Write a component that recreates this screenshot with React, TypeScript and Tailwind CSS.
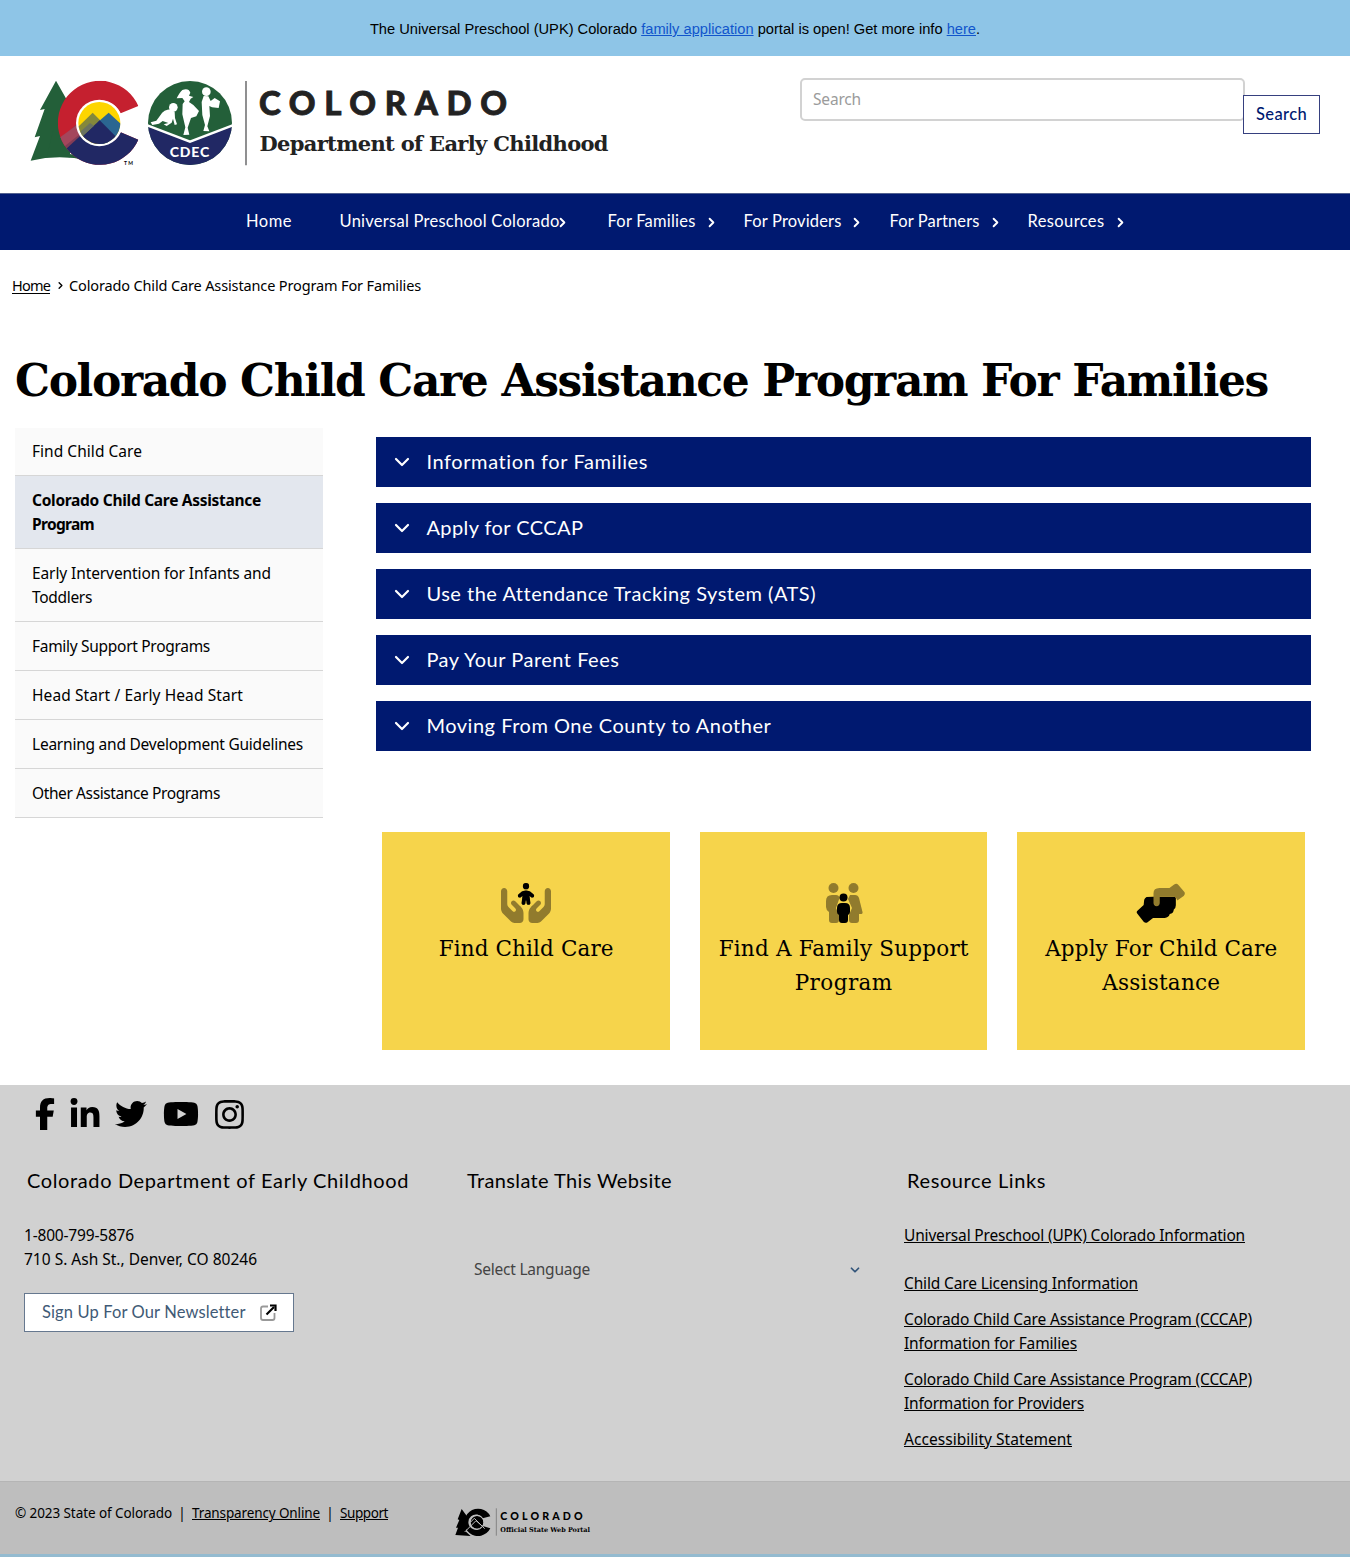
import { useLayoutEffect, useRef, useState } from "react";
import { ChevronDown, ChevronRight } from "lucide-react";
import { FaFacebookF, FaLinkedinIn, FaTwitter, FaYoutube, FaInstagram, FaHandsHoldingChild } from "react-icons/fa6";

/* A single line of text tracked so that it spans the given width. */
function Line({ w, children, className = "" }: { w: number; children: string; className?: string }) {
  const ref = useRef<HTMLSpanElement>(null);
  const [spacing, setSpacing] = useState(0);
  useLayoutEffect(() => {
    if (!ref.current) return;
    const natural = ref.current.getBoundingClientRect().width - spacing * children.length;
    setSpacing((w - natural) / children.length);
  }, [w, children]);
  return (
    <span ref={ref} className={"inline-block whitespace-nowrap " + className} style={{ letterSpacing: spacing + "px" }}>
      {children}
    </span>
  );
}

function Logo() {
  return (
    <svg viewBox="0 0 690 315" className="h-[105px] w-[230px] shrink-0">
      <defs>
        <clipPath id="cShape">
          <path d="M355 108A126 126 0 1 0 355 209L302 187A67 67 0 1 1 302 130Z" />
        </clipPath>
        <clipPath id="inner"><circle cx="238" cy="159" r="63" /></clipPath>
        <clipPath id="badge"><circle cx="510" cy="159" r="126" /></clipPath>
      </defs>
      <path d="M108 32L142 92L132 250Q180 255 205 272Q120 252 32 272L60 198L44 202L74 117L60 120Z" fill="#235f39" />
      <path d="M100 180H150V262Q110 256 80 262Z" fill="#235f39" />
      <g clipPath="url(#cShape)">
        <rect x="110" y="30" width="250" height="260" fill="#c5202f" />
        <path d="M110 217L190 145L240 175L143 245L120 240Z" fill="#823c56" />
        <path d="M139 236L200 180H360V290H180Z" fill="#212864" />
        <path d="M113 207L180 158L190 184L134 229Z" fill="#a4465c" />
      </g>
      <circle cx="238" cy="159" r="70" fill="#fff" />
      <g clipPath="url(#inner)">
        <rect x="170" y="90" width="140" height="140" fill="#fdd500" />
        <path d="M165 180L218 128L245 155L200 210Z" fill="#84883b" />
        <path d="M234 156L266 128L310 168V225H240Z" fill="#2b6691" />
        <path d="M170 215L239 151L310 222V240H170Z" fill="#212864" />
        <path d="M170 195L210 159L222 167L170 214Z" fill="#69715f" />
      </g>
      <circle cx="510" cy="159" r="126" fill="#235f39" />
      <path clipPath="url(#badge)" d="M380 169L510 217L640 169V290H380Z" fill="#212864" />
      <path d="M382 166L510 215L638 166" fill="none" stroke="#fff" strokeWidth="7" />
      <g fill="#fff">
        <circle cx="460" cy="112" r="13" />
        <path d="M452 118Q432 118 420 137L409 152L392 157L397 165L417 161L428 153L445 159L431 163L440 168L455 158L459 146L464 165L471 163L465 144L464 126Z" />
        <path d="M470 85Q480 65 487 60Q506 53 511 68L507 77L520 81L512 86L507 96L520 105L537 123L529 139L513 144L503 173L508 194L490 195L496 172L487 133L488 102L494 94L487 84Z" />
        <circle cx="559" cy="65" r="13" />
        <path d="M551 78L565 79L572 93L584 84L600 94L596 114L576 112L568 108L570 138L562 169L568 184L550 183L555 165L547 135L545 96Z" />
      </g>
      <text x="449" y="260" textLength="119" className="fill-white font-[Lato] text-[42px] font-black">CDEC</text>
      <text x="312" y="284" textLength="27" className="fill-black font-[Lato] text-[15px] font-bold">TM</text>
      <path d="M678 33V286" stroke="#58585a" strokeWidth="4" />
    </svg>
  );
}

function FamilyIcon() {
  return (
    <svg viewBox="0 0 38 40" className="h-10 w-[38px]">
      <g fill="#917b2d">
        <circle cx="8.500" cy="5" r="5" />
        <circle cx="28.500" cy="5" r="5" />
        <path d="M7 12H11Q14 12 14.500 15L11 25L14 32V37Q14 40 11 40H7Q4 40 4 37V29Q1 27 1 24V18Q1 12 7 12Z" />
        <path d="M25 12H30Q33 12 34 15L37.500 29Q38 31 35.500 31H34V37Q34 40 31 40H27Q24 40 24 37V32L27 25L23 16Z" />
      </g>
      <g fill="#000">
        <circle cx="18.500" cy="14.500" r="4" />
        <path d="M17 20H20Q25 20 25 25V29Q25 31 23 32V37Q23 40 20 40H17Q14 40 14 37V32Q12 31 12 29V25Q12 20 17 20Z" />
      </g>
    </svg>
  );
}

function HelpingIcon() {
  return (
    <svg viewBox="0 0 640 512" className="h-10 w-[50px]">
      <path d="M496 176H224L135 178Q112 192 105 214L98 280L22 352Q-2 372 18 395L98 496Q122 520 148 502L218 448H368Q418 446 432 398Q480 392 484 340Q510 320 510 285V190Z" />
      <path fill="#917b2d" d="M622 118L540 22Q518 -4 484 22L428 64H300Q224 66 224 130V256Q226 296 264 296T304 256V176H480Q516 178 528 224L610 166Q632 144 622 118Z" />
    </svg>
  );
}

function ChildIcon() {
  return (
    <span className="grid h-10 w-[50px] [&>*]:col-start-1 [&>*]:row-start-1">
      <FaHandsHoldingChild className="h-10 w-[50px] text-[#917b2d]" />
      <FaHandsHoldingChild className="h-10 w-[50px] text-black [clip-path:polygon(20%_0,80%_0,80%_37%,62%_43%,62%_58%,38%_58%,38%_43%,20%_37%)]" />
    </span>
  );
}

function SmallLogo() {
  return (
    <svg viewBox="0 0 510 246" className="h-[82px] w-[170px]">
      <path d="M65 102L82 125L78 170L92 183L46 180L54 158L48 158L58 135L53 133Z" />
      <path d="M151 124A41 41 0 1 0 151 160L128 153A23 23 0 1 1 128 130Z" />
      <circle cx="111" cy="142" r="19" />
      <path d="M74 171L108 137L132 158M91 142L103 130L134 161" fill="none" stroke="#bebebe" strokeWidth="3" />
      <circle cx="111" cy="142" r="21" fill="none" stroke="#bebebe" strokeWidth="3" />
      <path d="M169 100V182" stroke="#666" strokeWidth="2" />
      <text x="181" y="135" textLength="247" className="font-[Lato] text-[32px] font-black">COLORADO</text>
      <text x="181" y="171" textLength="269" lengthAdjust="spacingAndGlyphs" className="font-['DejaVu_Serif'] text-[20px] font-bold">Official State Web Portal</text>
    </svg>
  );
}

const navItems = [
  { t: "Home", w: 46, cls: "w-[93.500px]" },
  { t: "Universal Preschool Colorado", w: 220, cls: "w-[268px]", chev: "-ml-[5px]" },
  { t: "For Families", w: 88, cls: "w-[136px]", chev: "ml-[8px]" },
  { t: "For Providers", w: 98, cls: "w-[146px]", chev: "ml-[7px]" },
  { t: "For Partners", w: 90, cls: "w-[138px]", chev: "ml-[8px]" },
  { t: "Resources", w: 77, cls: "w-[110px]", chev: "ml-[8px]" },
];

const sideItems: { lines: [string, number][]; active?: boolean }[] = [
  { lines: [["Find Child Care", 110]] },
  { lines: [["Colorado Child Care Assistance", 229], ["Program", 62]], active: true },
  { lines: [["Early Intervention for Infants and", 239], ["Toddlers", 60]] },
  { lines: [["Family Support Programs", 178]] },
  { lines: [["Head Start / Early Head Start", 211]] },
  { lines: [["Learning and Development Guidelines", 271]] },
  { lines: [["Other Assistance Programs", 188]] },
];

const accordions: [string, number][] = [
  ["Information for Families", 222],
  ["Apply for CCCAP", 157],
  ["Use the Attendance Tracking System (ATS)", 389],
  ["Pay Your Parent Fees", 193],
  ["Moving From One County to Another", 345],
];

const cards: { icon: () => React.ReactNode; lines: [string, number][] }[] = [
  { icon: ChildIcon, lines: [["Find Child Care", 175]] },
  { icon: FamilyIcon, lines: [["Find A Family Support", 250], ["Program", 98]] },
  { icon: HelpingIcon, lines: [["Apply For Child Care", 232], ["Assistance", 118]] },
];

const resourceLinks: { lines: [string, number][]; cls: string }[] = [
  { lines: [["Universal Preschool (UPK) Colorado Information", 341]], cls: "mb-6" },
  { lines: [["Child Care Licensing Information", 234]], cls: "mb-3" },
  { lines: [["Colorado Child Care Assistance Program (CCCAP)", 348], ["Information for Families", 173]], cls: "mb-3" },
  { lines: [["Colorado Child Care Assistance Program (CCCAP)", 348], ["Information for Providers", 180]], cls: "mb-3" },
  { lines: [["Accessibility Statement", 168]], cls: "" },
];

export default function App() {
  return (
    <div className="flex h-[1557px] w-[1350px] flex-col overflow-hidden bg-white font-['Noto_Sans',sans-serif] text-[15.500px] text-black">
      <div className="flex h-14 shrink-0 items-center justify-center bg-[#8ec5e7] pt-[2px] font-['Liberation_Sans',sans-serif] text-[14.67px]">
        <p className="whitespace-nowrap">
          The Universal Preschool (UPK) Colorado <a className="text-[#1155cc] underline">family application</a> portal is open! Get more info{" "}
          <a className="text-[#1155cc] underline">here</a>.
        </p>
      </div>

      <header className="flex h-[137px] shrink-0 items-start pl-5">
        <div className="mt-[14px] flex">
          <Logo />
          <svg viewBox="0 0 370 105" className="h-[105px] w-[370px] overflow-visible">
            <text x="9" y="45" textLength="248" className="fill-[#222] stroke-[#222] stroke-[0.8] font-[Lato] text-[33px] font-black">COLORADO</text>
            <text x="9.500" y="81" textLength="349" className="fill-[#222] font-['DejaVu_Serif'] text-[21px] font-bold">Department of Early Childhood</text>
          </svg>
        </div>
        <div className="ml-[180px] mt-[22px] flex items-start">
          <div className="flex h-[43px] w-[445px] items-center rounded-[5px] border-2 border-[#d2d2d2] pl-[11px] text-[#9b9b9b]">
            <Line w={48}>Search</Line>
          </div>
          <div className="-ml-[2px] mt-[17px] flex h-[39px] w-[77px] items-center justify-center border border-[#36407f] bg-white font-[Lato] text-[16.500px] font-medium text-[#001970]">
            <Line w={51}>Search</Line>
          </div>
        </div>
      </header>

      <nav className="flex h-[57px] shrink-0 border-t border-[#52618f] bg-[#001970] pl-[246px] font-[Lato] text-[16.500px] text-white">
        {navItems.map((n) => (
          <div key={n.t} className={"flex h-[55px] shrink-0 items-center " + n.cls}>
            <Line w={n.w}>{n.t}</Line>
            {n.chev && <ChevronRight size={15} strokeWidth={3} className={"mt-px shrink-0 " + n.chev} />}
          </div>
        ))}
      </nav>

      <div className="flex h-[71px] shrink-0 items-center pl-3 text-[14.500px]">
        <Line w={38} className="underline underline-offset-2">Home</Line>
        <ChevronRight size={11} strokeWidth={3} className="ml-[4.500px] mr-[3.500px]" />
        <Line w={352}>Colorado Child Care Assistance Program For Families</Line>
      </div>

      <h1 className="h-[107px] shrink-0 pl-[15px] pt-[30px] font-['DejaVu_Serif',serif] text-[44px] font-bold leading-[60px]">
        <Line w={1253}>Colorado Child Care Assistance Program For Families</Line>
      </h1>

      <main className="flex h-[657px] shrink-0 pl-[15px]">
        <aside className="w-[308px] shrink-0">
          {sideItems.map((s) => (
            <a
              key={s.lines[0][0]}
              className={"flex flex-col items-start border-b border-[#d6d6d6] py-3 pl-[17px] leading-6 first:pt-[11px] " + (s.active ? "bg-[#e3e7ee] font-bold" : "bg-[#fafafa]")}
            >
              {s.lines.map(([t, w]) => (
                <Line key={t} w={w}>{t}</Line>
              ))}
            </a>
          ))}
        </aside>
        <section className="ml-[53.400px] w-[934.600px] pt-[9px]">
          <div className="flex flex-col gap-4">
            {accordions.map(([t, w]) => (
              <button key={t} className="flex h-[50px] items-center bg-[#001970] pl-[14px] font-[Lato] text-[20px] text-white">
                <ChevronDown size={24} strokeWidth={2.200} className="mr-[12px]" />
                <Line w={w} className="pb-[3px]">{t}</Line>
              </button>
            ))}
          </div>
          <div className="mt-[81px] flex gap-[30px] px-[6px]">
            {cards.map((c) => (
              <div key={c.lines[0][0]} className="flex h-[218px] flex-1 flex-col items-center bg-[#f6d44b] pt-[51px] font-['DejaVu_Serif',serif] text-[21.500px] leading-[34px]">
                <c.icon />
                <div className="mt-[9px] flex flex-col items-center">
                  {c.lines.map(([t, w]) => (
                    <Line key={t} w={w}>{t}</Line>
                  ))}
                </div>
              </div>
            ))}
          </div>
        </section>
      </main>

      <footer className="h-[396px] shrink-0 bg-[#d1d1d1]">
        <div className="flex h-[58px] items-center pl-[37px]">
          <FaFacebookF className="-ml-[2px] h-8 w-5" />
          <FaLinkedinIn className="ml-[15px] h-[33px] w-[30px]" />
          <FaTwitter className="ml-[15px] size-8" />
          <FaYoutube className="ml-[16px] size-9" />
          <FaInstagram className="ml-[14px] size-[33px]" />
        </div>
        <div className="flex pl-6">
          <div className="w-[440px]">
            <h2 className="pl-[3px] pt-[22px] font-[Lato] text-[20px] leading-[30px]"><Line w={382}>Colorado Department of Early Childhood</Line></h2>
            <div className="mt-[28px] flex flex-col items-start leading-6">
              <Line w={110}>1-800-799-5876</Line>
              <Line w={233}>710 S. Ash St., Denver, CO 80246</Line>
            </div>
            <a className="mt-[22px] flex h-[39px] w-[270px] items-center border border-[#66788f] bg-white pl-[17px] font-[Lato] text-[16.500px] text-[#3f5a76]">
              <Line w={203}>Sign Up For Our Newsletter</Line>
              <svg viewBox="0 0 17 17" className="ml-[14px] h-[17px] w-[17px]" fill="none">
                <path d="M8 2.500H3Q1 2.500 1 4.500V14Q1 16 3 16H12.500Q14.500 16 14.500 14V9" stroke="#999" strokeWidth="1.800" />
                <path d="M6.500 10.500L14 3" stroke="#000" strokeWidth="2.200" />
                <path d="M10 1.500H15.500V7" stroke="#000" strokeWidth="2.200" />
              </svg>
            </a>
          </div>
          <div className="w-[440px]">
            <h2 className="pl-[3px] pt-[22px] font-[Lato] text-[20px] leading-[30px]"><Line w={205}>Translate This Website</Line></h2>
            <div className="mt-[62px] flex w-[398px] items-center justify-between pl-[10px] leading-6 text-[#444]">
              <Line w={116}>Select Language</Line>
              <ChevronDown size={14} strokeWidth={3} className="mt-px text-[#33557a]" />
            </div>
          </div>
          <div>
            <h2 className="pl-[3px] pt-[22px] font-[Lato] text-[20px] leading-[30px]"><Line w={139}>Resource Links</Line></h2>
            <div className="mt-[28px] leading-6">
              {resourceLinks.map((r, i) => (
                <a key={i} className={"flex flex-col items-start " + r.cls}>
                  {r.lines.map(([t, w]) => (
                    <Line key={t} w={w} className="underline underline-offset-[1px]">{t}</Line>
                  ))}
                </a>
              ))}
            </div>
          </div>
        </div>
      </footer>

      <div className="flex h-[76px] shrink-0 items-start border-b-[3px] border-t border-b-[#94bbd0] border-t-[#b5b5b5] bg-[#bebebe] pl-[15px] text-[13.500px]">
        <div className="flex h-[63px] w-[425px] items-center">
          <Line w={157}>© 2023 State of Colorado</Line>
          <span className="w-5 text-center">|</span>
          <Line w={128} className="underline underline-offset-1">Transparency Online</Line>
          <span className="w-5 text-center">|</span>
          <Line w={48} className="underline underline-offset-1">Support</Line>
        </div>
        <div className="-mt-[7px]"><SmallLogo /></div>
      </div>
    </div>
  );
}
